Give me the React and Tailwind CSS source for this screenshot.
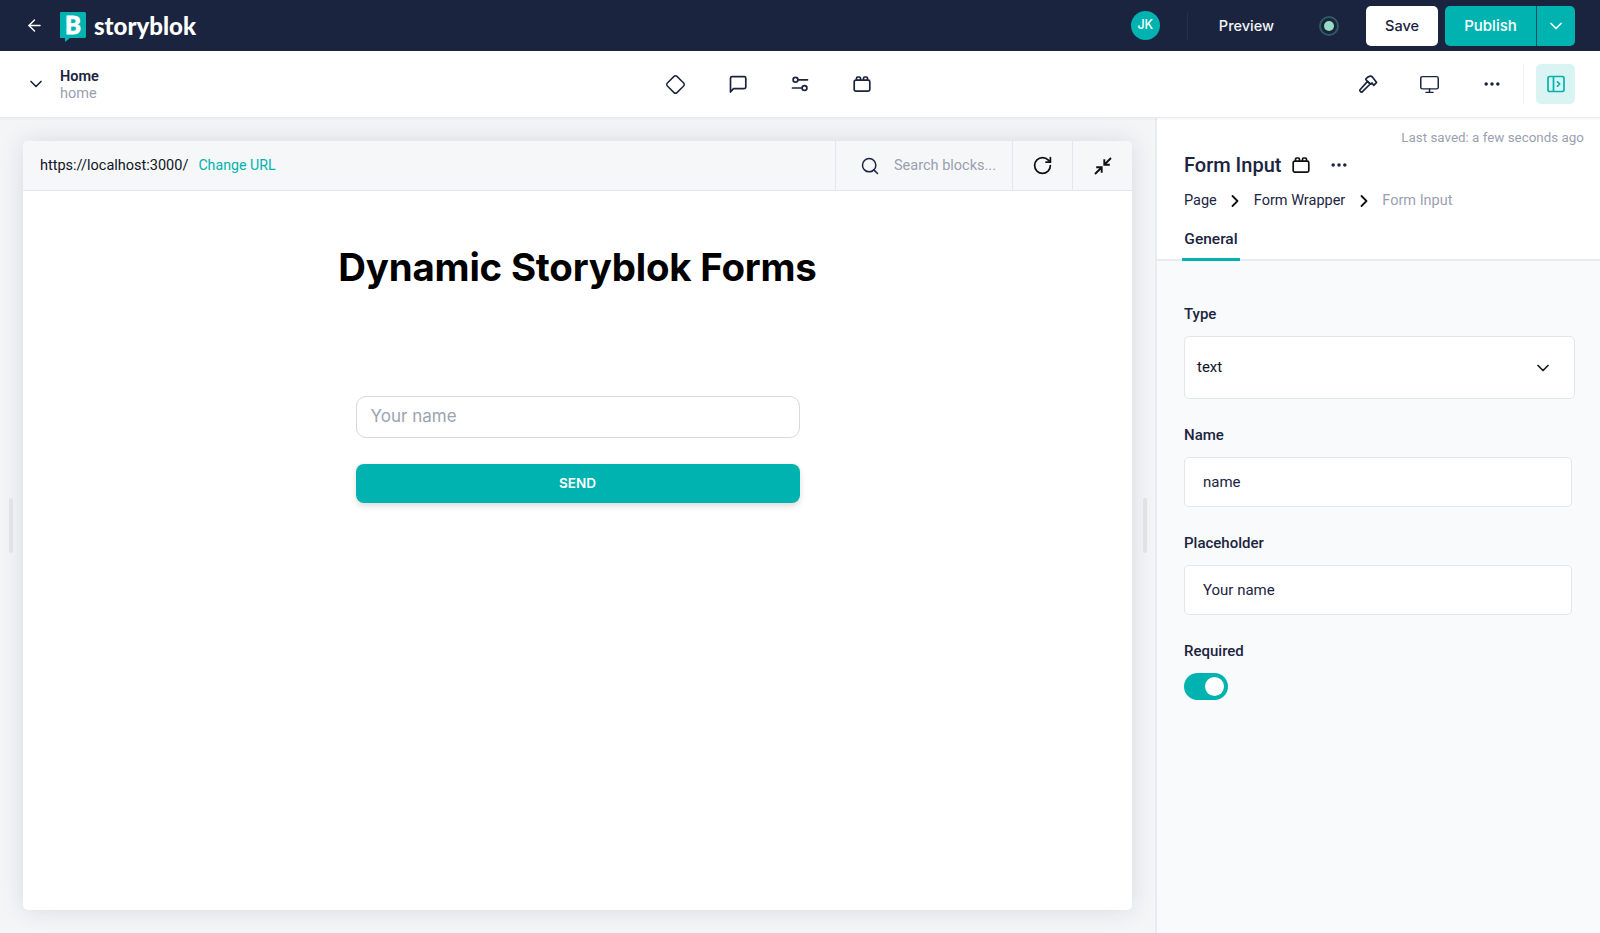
import React from "react";
import { ArrowLeft, ChevronDown, ChevronRight, Diamond, Monitor, MoreHorizontal, RotateCw, Search } from "lucide-react";

function Logo() {
  return (
    <div className="relative h-[30px] w-[26px] shrink-0">
      <svg width="26" height="30" viewBox="0 0 26 30">
        <path d="M1 0H24.5C25.3 0 26 .7 26 1.5V24.5C26 25.3 25.3 26 24.5 26H10L5 30V26H1C.4 26 0 25.6 0 25V1C0 .4.4 0 1 0Z" fill="#00b3b0" />
      </svg>
      <span className="absolute inset-x-0 top-[1px] text-center font-['Lato',sans-serif] text-[24px] leading-[24px] font-black text-white [-webkit-text-stroke:0.8px_white]">B</span>
    </div>
  );
}

function SpeechIcon({ className }) {
  return (
    <svg width="20" height="20" viewBox="0 0 20 20" fill="none" stroke="currentColor" strokeWidth="1.7" strokeLinejoin="round" className={className}>
      <path d="M2.5 18V4.2C2.5 3.3 3.2 2.6 4.1 2.6H16.2C17.1 2.6 17.8 3.3 17.8 4.2V13C17.8 13.9 17.1 14.6 16.2 14.6H5.5L2.5 18Z" />
    </svg>
  );
}

function SlidersIcon({ className }) {
  return (
    <svg width="20" height="20" viewBox="0 0 20 20" fill="none" stroke="currentColor" strokeWidth="1.7" strokeLinecap="round" className={className}>
      <circle cx="5.5" cy="5.8" r="2.4" />
      <path d="M8.2 5.8H17.5" />
      <circle cx="14.5" cy="14" r="2.4" />
      <path d="M2.5 14H11.8" />
    </svg>
  );
}

function BlockIcon({ className }) {
  return (
    <svg width="20" height="20" viewBox="0 0 20 20" fill="none" stroke="currentColor" strokeWidth="1.7" strokeLinejoin="round" className={className}>
      <rect x="2.2" y="6.2" width="15.6" height="11" rx="1.6" />
      <path d="M4.5 6.2V4.2C4.5 3.5 5 3 5.7 3H7.3C8 3 8.5 3.5 8.5 4.2V6.2M11.5 6.2V4.2C11.5 3.5 12 3 12.7 3H14.3C15 3 15.5 3.5 15.5 4.2V6.2" />
    </svg>
  );
}

function HammerIcon({ className }) {
  return (
    <svg width="20" height="20" viewBox="0 0 20 20" fill="none" stroke="currentColor" strokeWidth="1.7" strokeLinejoin="round" className={className}>
      <path d="M2 15.8L9.6 7.4L12.2 10L4.2 17.8C3.8 18.2 3.2 18.2 2.8 17.8L2 17C1.7 16.6 1.7 16.2 2 15.8Z" />
      <path d="M7.8 5C10.2 2 12.8 1.6 14.4 3L18.6 8.4L15.8 11.4L14 9L12.4 10.2L8.6 6.6Z" />
    </svg>
  );
}

function CollapseIcon({ className }) {
  return (
    <svg width="20" height="20" viewBox="0 0 20 20" fill="none" stroke="currentColor" strokeWidth="1.9" className={className}>
      <path d="M2 18L8.5 11.5M3.2 11.3H8.7V16.8" />
      <path d="M18 2L11.5 8.5M16.8 8.7H11.3V3.2" />
    </svg>
  );
}

function PanelIcon({ className }) {
  return (
    <svg width="18" height="18" viewBox="0 0 18 18" fill="none" stroke="currentColor" strokeWidth="1.7" strokeLinejoin="round" className={className}>
      <rect x="1" y="1.5" width="16" height="15" rx="1.6" />
      <path d="M6.5 1.5V16.5" />
      <path d="M10.5 6.8L12.7 9L10.5 11.2" strokeLinecap="round" />
    </svg>
  );
}

function Field({ label, value }) {
  return (
    <div className="mb-[28px]">
      <div className="h-[17px] text-[15px] leading-[17px] font-medium text-[#1b243f]">{label}</div>
      <div className="mt-[13px] flex h-[50px] w-[388px] items-center rounded-[5px] border border-[#e3e6ed] bg-white pl-[18px] text-[15px] text-[#1b243f]">
        {value}
      </div>
    </div>
  );
}

export default function App() {
  return (
    <div className="flex h-[933px] w-[1600px] flex-col overflow-hidden bg-white font-['Roboto',sans-serif] text-[#1b243f]">
      {/* top bar */}
      <header className="flex h-[51px] shrink-0 items-center bg-[#1b243f]">
        <ArrowLeft size={19} strokeWidth={1.8} className="ml-[25px] text-white" />
        <div className="ml-[16px] mt-[3px]">
          <Logo />
        </div>
        <div className="ml-[8px] font-['Lato',sans-serif] text-[24px] font-black leading-none text-white">storyblok</div>

        <div className="ml-auto flex items-center font-['Inter',sans-serif]">
          <div className="flex h-[29px] w-[29px] items-center justify-center rounded-full bg-[#00b3b0] text-[12.5px] font-medium text-white">JK</div>
          <div className="ml-[27px] h-[28px] w-px bg-[#262f4b]" />
          <div className="ml-[31px] text-[14.5px] font-medium text-[#f3f4f6]">Preview</div>
          <div className="ml-[45px] flex h-[20px] w-[20px] items-center justify-center rounded-full border-2 border-[#2e5a60]">
            <div className="h-[10px] w-[10px] rounded-full bg-[#95dcc0]" />
          </div>
          <button className="ml-[27px] h-[40px] w-[72px] rounded-[5px] bg-white text-[14.5px] font-medium text-[#1b243f]">Save</button>
          <div className="ml-[7px] mr-[25px] flex h-[40px] overflow-hidden rounded-[5px] bg-[#00b3b0] text-white">
            <button className="w-[91px] pt-[1px] text-[15px] font-medium">Publish</button>
            <div className="w-px bg-[#1b243f]/70" />
            <button className="flex w-[38px] items-center justify-center">
              <ChevronDown size={20} strokeWidth={2} />
            </button>
          </div>
        </div>
      </header>

      {/* story bar */}
      <div className="relative z-10 flex h-[67px] shrink-0 items-center border-b border-[#e9ebef] bg-white shadow-[0_1px_2px_rgba(27,36,63,0.05)]">
        <ChevronDown size={20} strokeWidth={2} className="ml-[26px]" />
        <div className="ml-[14px] mt-[2px] w-[605px]">
          <div className="text-[14.5px] leading-[17px] font-semibold">Home</div>
          <div className="mt-[1px] text-[14.5px] leading-[16px] text-[#9a9fb0]">home</div>
        </div>
        <div className="flex items-center gap-[42px]">
          <Diamond size={21} strokeWidth={1.7} />
          <SpeechIcon />
          <SlidersIcon />
          <BlockIcon />
        </div>
        <div className="ml-auto flex items-center">
          <HammerIcon />
          <Monitor size={21} strokeWidth={1.7} className="ml-[41px]" />
          <MoreHorizontal size={20} strokeWidth={2.2} className="ml-[42px]" />
          <div className="ml-[21px] h-[40px] w-px bg-[#eef0f3]" />
          <div className="ml-[12px] mr-[25px] flex h-[40px] w-[39px] items-center justify-center rounded-[5px] bg-[#daf4f3] text-[#00b3b0]">
            <PanelIcon />
          </div>
        </div>
      </div>

      <div className="flex min-h-0 flex-1">
        {/* preview area */}
        <main className="relative w-[1155px] shrink-0 bg-[#f4f5f7] pb-[23px] pl-[23px] pr-[23px] pt-[23px]">
          <div className="absolute left-[9px] top-[380px] h-[55px] w-[4px] rounded bg-[#e1e2e4]" />
          <div className="absolute left-[1143px] top-[380px] h-[55px] w-[4px] rounded bg-[#e1e2e4]" />
          <div className="flex h-full flex-col rounded-[5px] bg-white shadow-[0_0_24px_rgba(27,36,63,0.12)]">
            <div className="flex h-[50px] shrink-0 items-stretch rounded-t-[5px] border-b border-[#e3e6ed] bg-[#f6f7f9]">
              <div className="flex flex-1 items-center pl-[17px]">
                <span className="text-[14.5px] text-[#0f1525]">https://localhost:3000/</span>
                <span className="ml-[10px] text-[14.2px] text-[#00b3b0]">Change URL</span>
              </div>
              <div className="flex w-[177px] items-center border-l border-[#e3e6ed] pl-[24px]">
                <Search size={20} strokeWidth={1.8} />
                <span className="ml-[14px] text-[14.5px] text-[#9a9fb0]">Search blocks...</span>
              </div>
              <div className="flex w-[60px] items-center justify-center border-l border-[#e3e6ed] text-[#111]">
                <RotateCw size={21} strokeWidth={2} />
              </div>
              <div className="flex w-[60px] items-center justify-center border-l border-[#e3e6ed] text-[#111]">
                <CollapseIcon />
              </div>
            </div>
            <div className="flex flex-col items-center font-['Inter',sans-serif]">
              <h1 className="mt-[54px] text-[38.4px] leading-[44px] font-bold tracking-[-0.2px] text-black">Dynamic Storyblok Forms</h1>
              <div className="mt-[107px] flex h-[42px] w-[444px] items-center rounded-[10px] border-[1.5px] border-[#d6d9e2] pl-[14px] text-[17px] text-[#9ca3af]">Your name</div>
              <button className="mt-[26px] h-[39px] w-[444px] rounded-[8px] bg-[#00b3b0] text-[13.5px] font-semibold text-white shadow-[0_3px_6px_rgba(0,0,0,0.14)]">SEND</button>
            </div>
          </div>
        </main>

        {/* side panel */}
        <aside className="flex min-w-0 flex-1 flex-col border-l-2 border-[#e9ebef] bg-[#f9fafb]">
          <div className="h-[143px] shrink-0 border-b-2 border-[#e9eaec] bg-white">
            <div className="pr-[16px] pt-[12px] text-right text-[13.4px] leading-[16px] text-[#9a9fb0]">Last saved: a few seconds ago</div>
            <div className="ml-[27px] mt-[5px] flex h-[28px] items-center">
              <span className="text-[20px] font-medium">Form Input</span>
              <BlockIcon className="ml-[10px] text-[#111]" />
              <MoreHorizontal size={20} strokeWidth={2.2} className="ml-[18px]" />
            </div>
            <div className="ml-[27px] mt-[12px] flex h-[20px] items-center text-[14.5px]">
              <span>Page</span>
              <ChevronRight size={20} strokeWidth={2.2} className="ml-[8px] text-[#111]" />
              <span className="ml-[9px]">Form Wrapper</span>
              <ChevronRight size={20} strokeWidth={2.2} className="ml-[9px] text-[#111]" />
              <span className="ml-[8px] text-[#9a9fb0]">Form Input</span>
            </div>
            <div className="ml-[25px] mt-[20px] flex h-[30px] w-[58px] justify-center border-b-[3px] border-[#00b3b0] text-[15.5px] leading-[17px] font-medium">General</div>
          </div>
          <div className="pl-[27px] pt-[45px]">
            <div className="h-[17px] text-[15px] leading-[17px] font-medium">Type</div>
            <div className="mb-[28px] mt-[13px] flex h-[63px] w-[391px] items-center justify-between rounded-[5px] border border-[#e3e6ed] bg-white pl-[12px] pr-[21px] text-[15px] text-[#0f1525]">
              text
              <ChevronDown size={20} strokeWidth={2} />
            </div>
            <Field label="Name" value="name" />
            <Field label="Placeholder" value="Your name" />
            <div className="h-[17px] text-[15px] leading-[17px] font-medium">Required</div>
            <div className="mt-[13px] flex h-[27px] w-[44px] items-center justify-end rounded-full bg-[#00b3b0] pr-[4px]">
              <div className="h-[19px] w-[19px] rounded-full bg-white" />
            </div>
          </div>
        </aside>
      </div>
    </div>
  );
}
